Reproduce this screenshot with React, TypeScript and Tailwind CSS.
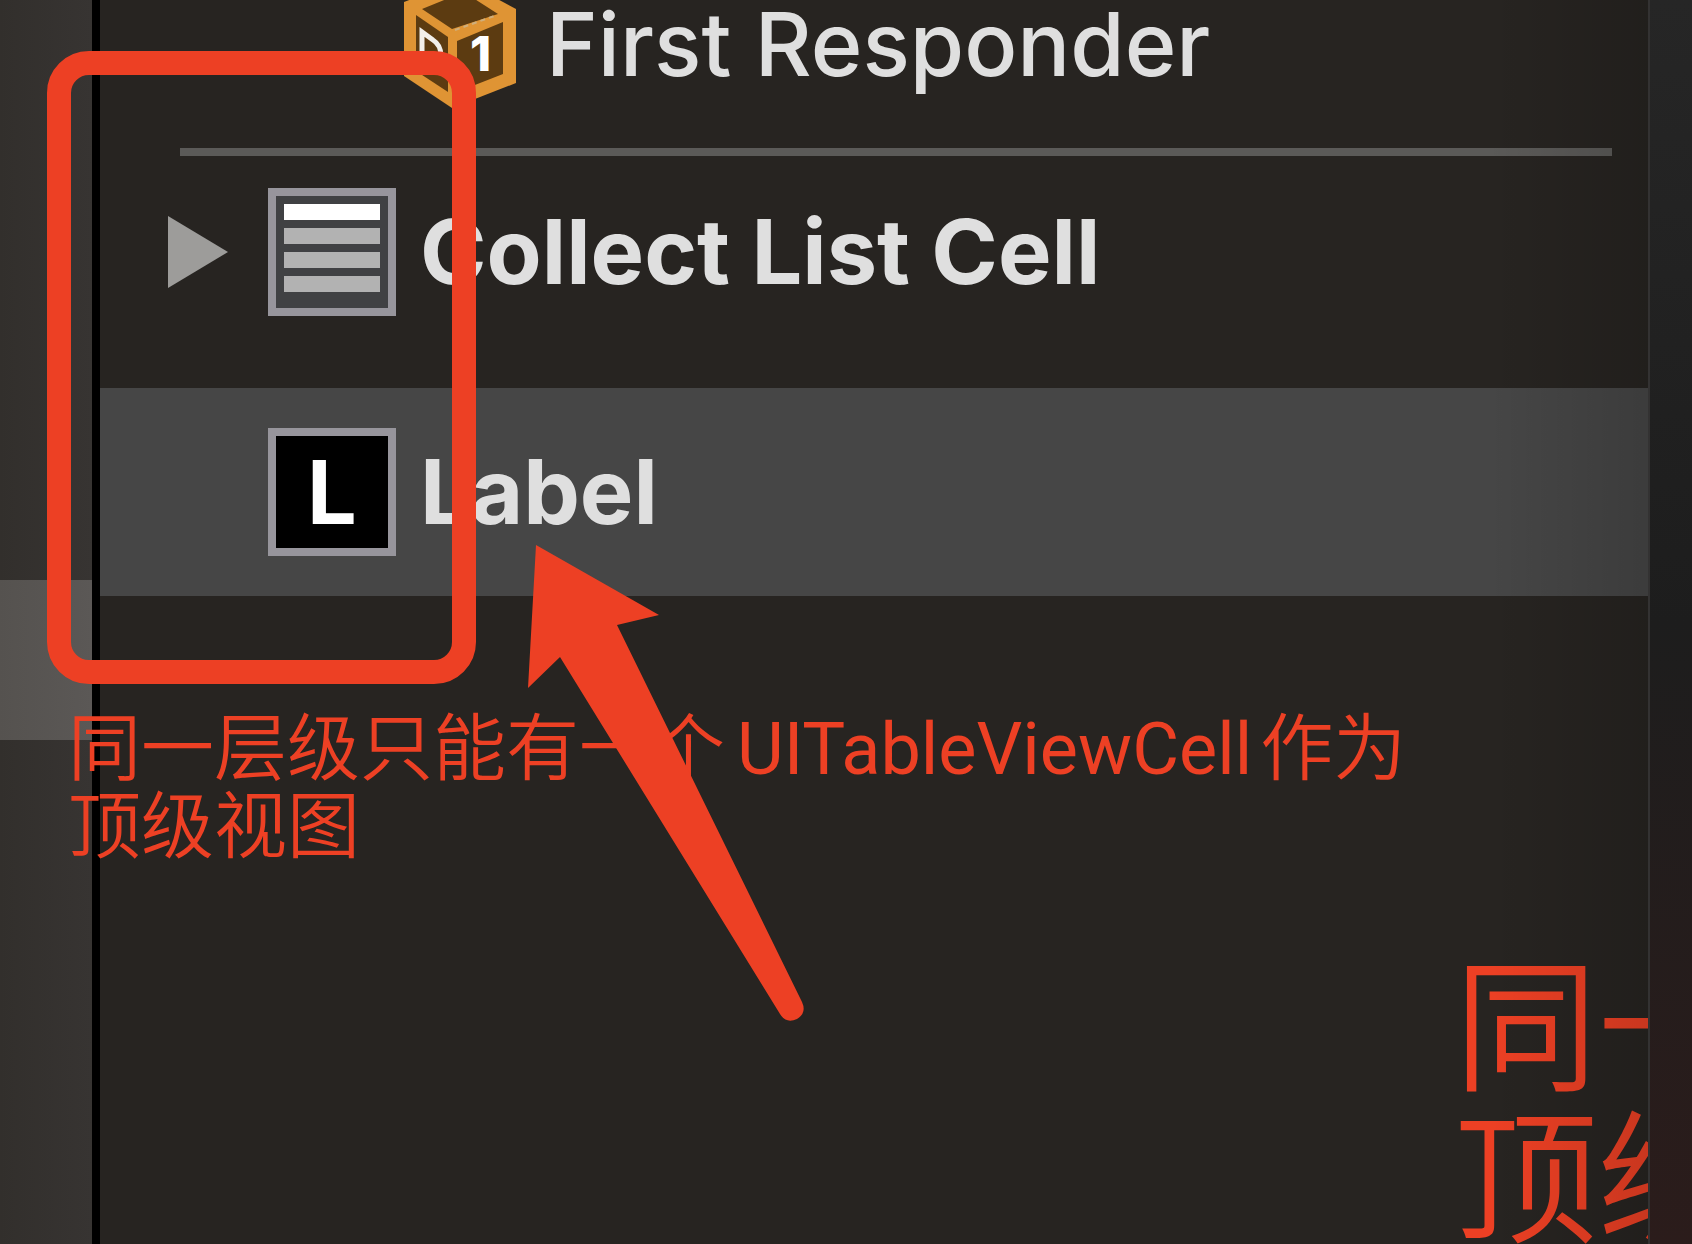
function ResponderCube() {
  return (
    <svg viewBox="0 0 112 128" className="h-32 w-28 shrink-0" aria-hidden="true">
      <path d="M0 22 L58 0 L112 29 V103 L48 128 L0 96 Z" fill="#df9434" />
      <path d="M18 29 L50 16 H66 L94 34 L48 49 Z" fill="#5c3b11" />
      <path d="M12 35 L44 57 V112 L12 91 Z" fill="#5c3b11" />
      <path d="M53 61 L99 42 V94 L53 112 Z" fill="#5c3b11" />
      <path d="M51 50 L93 35" fill="none" stroke="#cfae7c" strokeWidth="2" strokeDasharray="5 4" />
      <path d="M18 78 V52 L29 60 Q37 65 37 76" fill="none" stroke="#f2efea" strokeWidth="5" />
      <text x="66" y="91" fontSize="48" fontWeight="800" fill="#ffffff" fontFamily="Inter, sans-serif">
        1
      </text>
    </svg>
  );
}

function CellIcon() {
  return (
    <span className="flex size-32 shrink-0 flex-col gap-2 border-8 border-[#97959c] bg-[#404143] p-2">
      <span className="h-4 bg-white" />
      <span className="h-4 bg-[#b2b2b2]" />
      <span className="h-4 bg-[#b2b2b2]" />
      <span className="h-4 bg-[#b2b2b2]" />
    </span>
  );
}

function LabelIcon() {
  return (
    <span className="flex size-32 shrink-0 items-center justify-center border-8 border-[#97959c] bg-black text-[88px] leading-none font-bold text-white">
      L
    </span>
  );
}

function RedArrow() {
  return (
    <svg viewBox="0 0 280 478" className="absolute top-[544px] left-[526px] h-[478px] w-[280px]" aria-hidden="true">
      <path
        d="M10 1 L133 71 L91 81 L276 458 Q281 469 271 475 Q260 480 254 470 L34 113 L2 144 Z"
        fill="#ed4024"
      />
    </svg>
  );
}

export default function App() {
  return (
    <div className="relative flex h-screen overflow-hidden bg-[#272421] font-['Inter','Noto_Sans_CJK_SC',sans-serif]">
      <aside className="flex w-[92px] shrink-0 flex-col bg-linear-to-r from-[#322f2c] to-[#373432]">
        <div className="h-[580px] shrink-0" />
        <div className="h-40 shrink-0 bg-linear-to-r from-[#55524f] to-[#5b5856]" />
      </aside>

      <main className="relative min-w-0 flex-1 overflow-hidden border-l-8 border-black leading-none text-[#dfdfdf]">
        <ul>
          <li className="flex h-[148px] pl-[304px]">
            <div className="flex h-[88px] items-center gap-[30px]">
              <ResponderCube />
              <span className="text-[88px] font-medium whitespace-nowrap">First Responder</span>
            </div>
          </li>
          <li className="mr-9 ml-20 h-2 bg-[#5b5a58]" role="separator" />
          <li className="flex items-center pt-8 pb-[72px] pl-[68px]">
            <button type="button" aria-label="Expand Collect List Cell" className="mr-10 shrink-0">
              <svg viewBox="0 0 60 72" className="h-[72px] w-[60px]" aria-hidden="true">
                <path d="M0 0 L60 36 L0 72 Z" fill="#9d9c9a" />
              </svg>
            </button>
            <CellIcon />
            <span className="ml-6 text-[90px] font-bold whitespace-nowrap">Collect List Cell</span>
          </li>
          <li className="flex items-center bg-[#464646] py-10 pl-[168px]">
            <LabelIcon />
            <span className="ml-6 text-[90px] font-bold whitespace-nowrap">Label</span>
          </li>
        </ul>
        <p className="absolute top-[952px] left-[1354px] text-[144px] leading-[152px] font-[350] whitespace-nowrap text-[#ed4024]">
          同一
          <br />
          顶级
        </p>
        <div className="absolute inset-y-0 right-0 w-40 bg-linear-to-r from-transparent to-black/15" />
      </main>

      <aside className="w-11 shrink-0 border-l-2 border-[#333232] bg-linear-to-b from-[#262626] via-[#1d1d1d] via-50% to-[#2b1c1b]" />

      <div className="absolute top-[51px] left-[47px] h-[633px] w-[429px] rounded-[42px] border-[24px] border-[#ed4024]" />
      <p className="absolute top-[710px] left-[68px] text-[73px] leading-[76px] font-[350] whitespace-nowrap text-[#ed4024]">
        同一层级只能有一个
        <span className="mr-2 ml-3 font-['Roboto'] text-[72px] font-normal">UITableViewCell</span>
        作为
        <br />
        顶级视图
      </p>
      <RedArrow />
    </div>
  );
}
